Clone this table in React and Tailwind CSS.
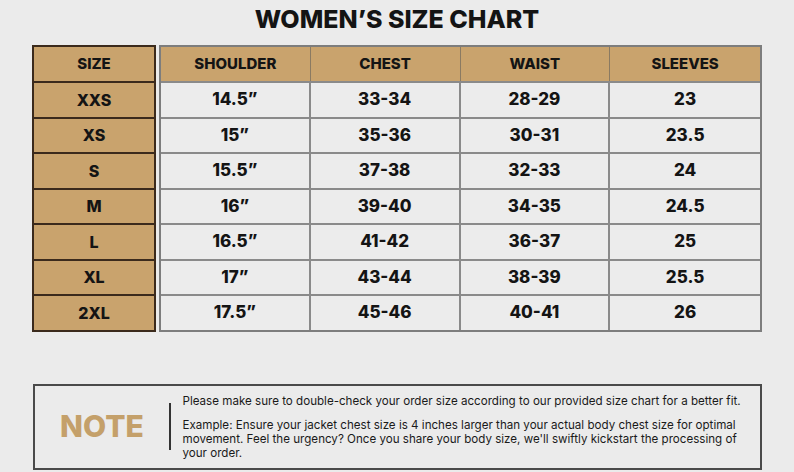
import React from 'react';

const rows = [
  ['XXS', '14.5”', '33-34', '28-29', '23'],
  ['XS', '15”', '35-36', '30-31', '23.5'],
  ['S', '15.5”', '37-38', '32-33', '24'],
  ['M', '16”', '39-40', '34-35', '24.5'],
  ['L', '16.5”', '41-42', '36-37', '25'],
  ['XL', '17”', '43-44', '38-39', '25.5'],
  ['2XL', '17.5”', '45-46', '40-41', '26'],
];

const headers = ['SHOULDER', 'CHEST', 'WAIST', 'SLEEVES'];

export default function App() {
  return (
    <div className="w-[794px] h-[472px] bg-[#ebebeb] overflow-hidden font-['Inter',sans-serif] text-[#141414]">
      {/* title */}
      <h1 className="pt-[3px] text-center text-[25px] leading-[32px] font-extrabold">
        WOMEN’S SIZE CHART
      </h1>

      {/* tables */}
      <div className="mt-[10px] ml-[32px] flex gap-[3px]">
        {/* size column */}
        <div className="w-[124px] border-2 border-[#3b2a1c] bg-[#c9a36d] flex flex-col">
          <div className="h-[34px] flex items-center justify-center text-[15px] font-extrabold">SIZE</div>
          {rows.map((r) => (
            <div key={r[0]} className="h-[35.5px] border-t-2 border-[#3b2a1c] flex items-center justify-center text-[16px] font-extrabold">
              {r[0]}
            </div>
          ))}
        </div>

        {/* measurements */}
        <div className="w-[603px] border-2 border-[#7d7d7d] flex flex-col">
          <div className="h-[34px] grid grid-cols-4 bg-[#c9a36d] divide-x divide-[#8a7a62]">
            {headers.map((h) => (
              <div key={h} className="flex items-center justify-center text-[15px] font-extrabold">{h}</div>
            ))}
          </div>
          {rows.map((r) => (
            <div key={r[0]} className="h-[35.5px] grid grid-cols-4 bg-[#ececec] border-t-2 border-[#8a8a8a] divide-x-2 divide-[#8a8a8a]">
              {r.slice(1).map((v, i) => (
                <div key={i} className="flex items-center justify-center text-[17px] font-extrabold">{v}</div>
              ))}
            </div>
          ))}
        </div>
      </div>

      {/* note */}
      <div className="mt-[52px] ml-[33px] w-[729px] h-[86px] border-2 border-[#4a4a4a] flex items-center">
        <div className="w-[134px] shrink-0 flex justify-center text-[30px] font-extrabold text-[#c4a06a]">NOTE</div>
        <div className="w-[1.5px] h-[47px] shrink-0 bg-[#333]" />
        <div className="pl-[12px] pr-[14px] text-[11.6px] leading-[14px] text-[#1a1a1a]">
          <p>Please make sure to double-check your order size according to our provided size chart for a better fit.</p>
          <p className="mt-[10px]">
            Example: Ensure your jacket chest size is 4 inches larger than your actual body chest size for optimal
            movement. Feel the urgency? Once you share your body size, we'll swiftly kickstart the processing of
            your order.
          </p>
        </div>
      </div>
    </div>
  );
}
